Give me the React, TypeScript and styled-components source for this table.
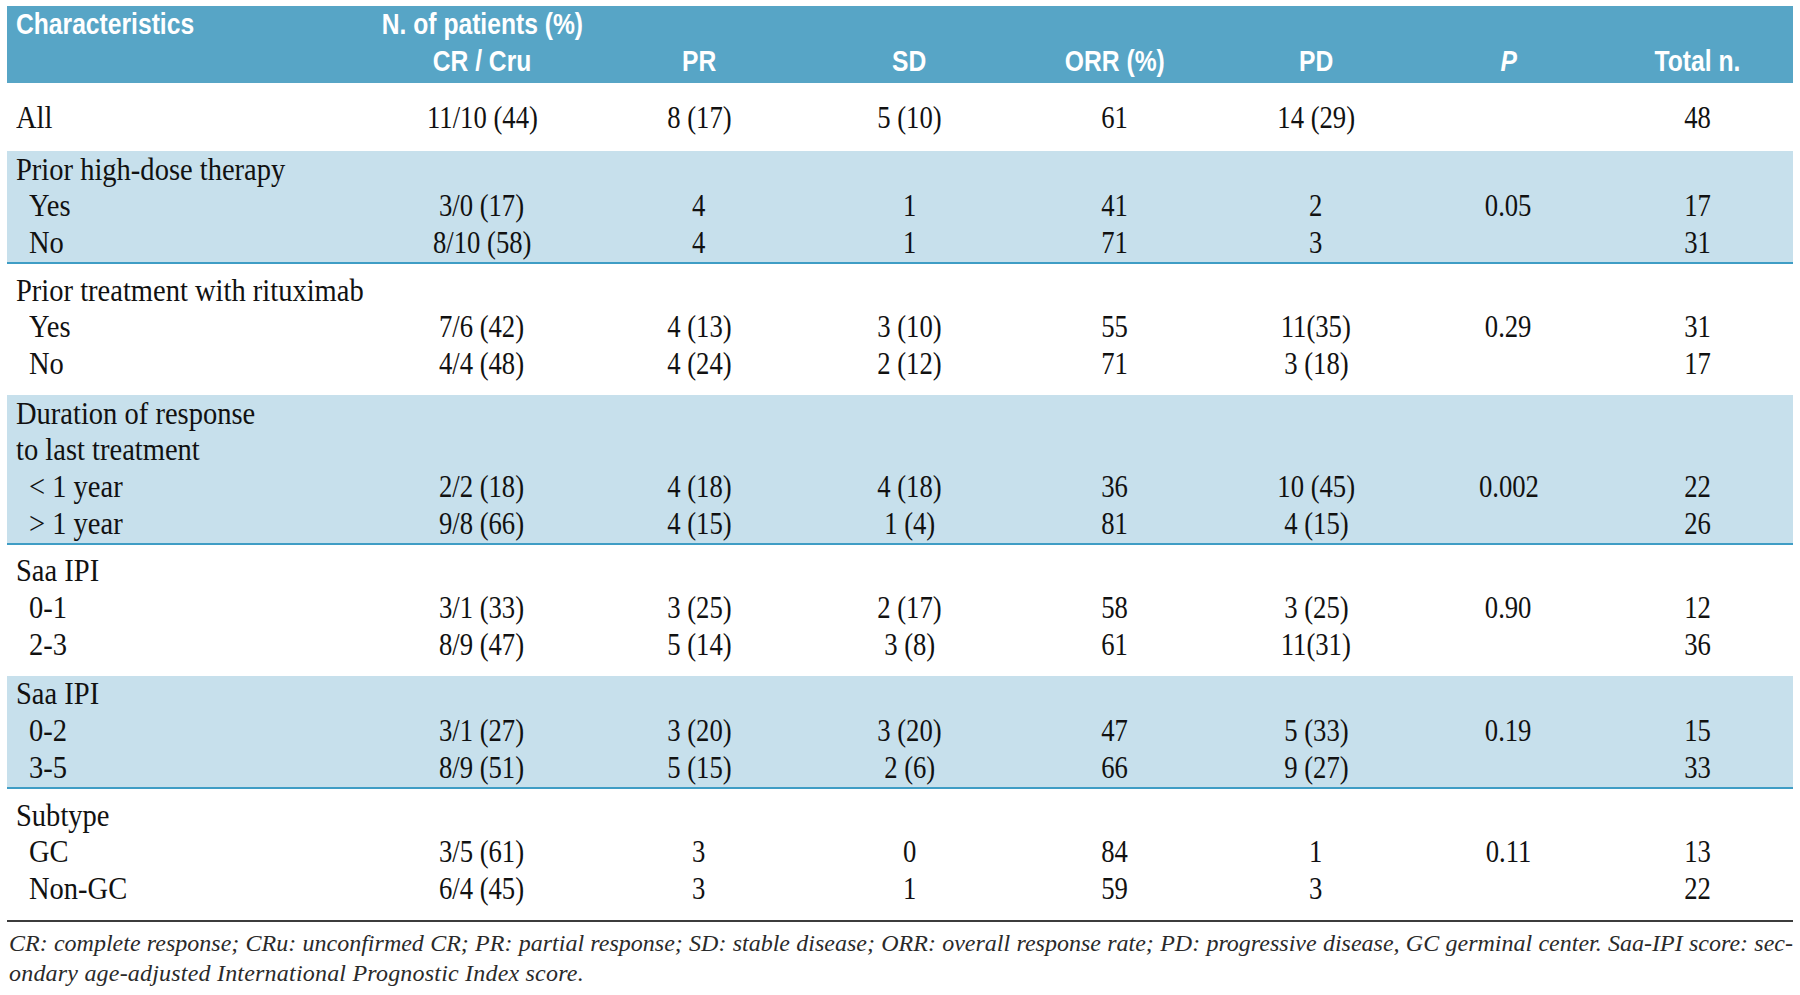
import React from 'react'
import styled, { createGlobalStyle } from 'styled-components'

const GlobalStyle = createGlobalStyle`
  html, body {
    margin: 0;
    padding: 0;
    background: #ffffff;
  }
`

const COLUMNS = '366px 218px 216px 205px 205px 198px 187px 191px'

const Page = styled.div`
  padding: 6px 7px 0;
  width: 1786px;
  font-family: 'Liberation Serif', 'Times New Roman', serif;
  color: #111111;
`

const HeaderBand = styled.div`
  display: grid;
  grid-template-columns: ${COLUMNS};
  grid-auto-rows: 37px;
  align-items: center;
  height: 77px;
  box-sizing: border-box;
  background: #57a5c6;
  color: #ffffff;
  font-family: 'Liberation Sans', Arial, sans-serif;
  font-weight: 700;
  font-size: 29px;
`

const HeadCell = styled.div<{ $left?: boolean; $col?: number; $row: number }>`
  grid-row: ${p => p.$row};
  grid-column: ${p => p.$col ?? 'auto'};
  display: flex;
  justify-content: ${p => (p.$left ? 'flex-start' : 'center')};
  padding-left: ${p => (p.$left ? '9px' : '0')};
  white-space: nowrap;
  line-height: 1;
`

const HeadText = styled.span<{ $left?: boolean; $italic?: boolean }>`
  display: inline-block;
  transform: scaleX(0.85);
  transform-origin: ${p => (p.$left ? 'left' : 'center')} center;
  font-style: ${p => (p.$italic ? 'italic' : 'normal')};
`

const Section = styled.div<{ $shaded?: boolean; $all?: boolean }>`
  background: ${p => (p.$shaded ? '#c7e0ec' : '#ffffff')};
  border-bottom: ${p => (p.$shaded ? '2px solid #3f9dc5' : 'none')};
  padding: ${p => (p.$all ? '16px 0 15px' : p.$shaded ? '0 0 1px' : '8px 0 13px')};
`

const Row = styled.div`
  display: grid;
  grid-template-columns: ${COLUMNS};
  height: 36.7px;
  align-items: center;
  font-size: 31px;
  line-height: 1;
`

const Cell = styled.div<{ $label?: boolean; $indent?: boolean }>`
  display: flex;
  justify-content: ${p => (p.$label ? 'flex-start' : 'center')};
  padding-left: ${p => (p.$label ? (p.$indent ? '22px' : '9px') : '0')};
  white-space: nowrap;
`

const CellText = styled.span<{ $label?: boolean }>`
  display: inline-block;
  transform: scaleX(${p => (p.$label ? 0.92 : 0.86)});
  transform-origin: ${p => (p.$label ? 'left' : 'center')} center;
`

const Rule = styled.div`
  height: 2px;
  background: #3c3c3c;
`

const Footnote = styled.div`
  padding-top: 6px;
  font-style: italic;
  font-size: 24px;
  line-height: 30px;
  color: #2a2a2a;
  padding-left: 2px;
`

const FootLine = styled.div<{ $justify?: boolean }>`
  white-space: nowrap;
  text-align: ${p => (p.$justify ? 'justify' : 'left')};
  text-align-last: ${p => (p.$justify ? 'justify' : 'left')};
  letter-spacing: ${p => (p.$justify ? '0' : '0.2px')};
`

type Line = { label: string; sub?: boolean; values?: string[] }
type Group = { shaded?: boolean; all?: boolean; lines: Line[] }

const groups: Group[] = [
  { all: true, lines: [{ label: 'All', values: ['11/10 (44)', '8 (17)', '5 (10)', '61', '14 (29)', '', '48'] }] },
  {
    shaded: true,
    lines: [
      { label: 'Prior high-dose therapy' },
      { label: 'Yes', sub: true, values: ['3/0 (17)', '4', '1', '41', '2', '0.05', '17'] },
      { label: 'No', sub: true, values: ['8/10 (58)', '4', '1', '71', '3', '', '31'] },
    ],
  },
  {
    lines: [
      { label: 'Prior treatment with rituximab' },
      { label: 'Yes', sub: true, values: ['7/6 (42)', '4 (13)', '3 (10)', '55', '11(35)', '0.29', '31'] },
      { label: 'No', sub: true, values: ['4/4 (48)', '4 (24)', '2 (12)', '71', '3 (18)', '', '17'] },
    ],
  },
  {
    shaded: true,
    lines: [
      { label: 'Duration of response' },
      { label: 'to last treatment' },
      { label: '< 1 year', sub: true, values: ['2/2 (18)', '4 (18)', '4 (18)', '36', '10 (45)', '0.002', '22'] },
      { label: '> 1 year', sub: true, values: ['9/8 (66)', '4 (15)', '1 (4)', '81', '4 (15)', '', '26'] },
    ],
  },
  {
    lines: [
      { label: 'Saa IPI' },
      { label: '0-1', sub: true, values: ['3/1 (33)', '3 (25)', '2 (17)', '58', '3 (25)', '0.90', '12'] },
      { label: '2-3', sub: true, values: ['8/9 (47)', '5 (14)', '3 (8)', '61', '11(31)', '', '36'] },
    ],
  },
  {
    shaded: true,
    lines: [
      { label: 'Saa IPI' },
      { label: '0-2', sub: true, values: ['3/1 (27)', '3 (20)', '3 (20)', '47', '5 (33)', '0.19', '15'] },
      { label: '3-5', sub: true, values: ['8/9 (51)', '5 (15)', '2 (6)', '66', '9 (27)', '', '33'] },
    ],
  },
  {
    lines: [
      { label: 'Subtype' },
      { label: 'GC', sub: true, values: ['3/5 (61)', '3', '0', '84', '1', '0.11', '13'] },
      { label: 'Non-GC', sub: true, values: ['6/4 (45)', '3', '1', '59', '3', '', '22'] },
    ],
  },
]

const columnHeads = ['CR/Cru', 'PR', 'SD', 'ORR (%)', 'PD', 'P', 'Total n.']

export default function App() {
  return (
    <Page>
      <GlobalStyle />
      <HeaderBand>
        <HeadCell $row={1} $col={1} $left>
          <HeadText $left>Characteristics</HeadText>
        </HeadCell>
        <HeadCell $row={1} $col={2}>
          <HeadText>N. of patients (%)</HeadText>
        </HeadCell>
        {columnHeads.map((h, i) => (
          <HeadCell key={h} $row={2} $col={i + 2}>
            <HeadText $italic={h === 'P'}>{h === 'CR/Cru' ? 'CR / Cru' : h}</HeadText>
          </HeadCell>
        ))}
      </HeaderBand>

      {groups.map((g, gi) => (
        <Section key={gi} $shaded={g.shaded} $all={g.all}>
          {g.lines.map((l, li) => (
            <Row key={li}>
              <Cell $label $indent={l.sub}>
                <CellText $label>{l.label}</CellText>
              </Cell>
              {(l.values ?? ['', '', '', '', '', '', '']).map((v, vi) => (
                <Cell key={vi}>
                  <CellText>{v}</CellText>
                </Cell>
              ))}
            </Row>
          ))}
        </Section>
      ))}

      <Rule />
      <Footnote>
        <FootLine $justify>
          CR: complete response; CRu: unconfirmed CR; PR: partial response; SD: stable disease; ORR: overall
          response rate; PD: progressive disease, GC germinal center. Saa-IPI score: sec-
        </FootLine>
        <FootLine>ondary age-adjusted International Prognostic Index score.</FootLine>
      </Footnote>
    </Page>
  )
}
